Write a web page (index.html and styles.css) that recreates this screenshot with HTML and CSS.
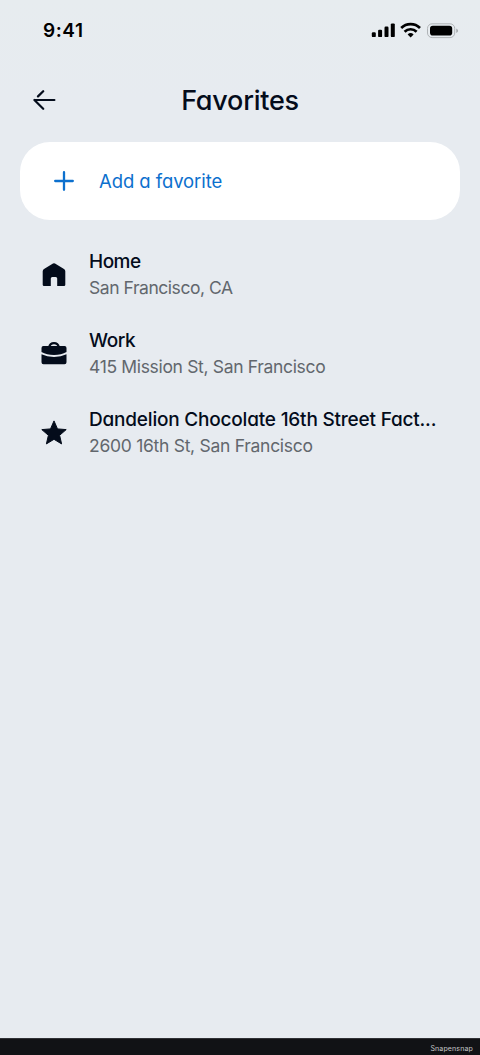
FILE: index.html
```html
<!DOCTYPE html>
<html lang="en">
<head>
<meta charset="utf-8">
<title>Favorites</title>
<link rel="stylesheet" href="styles.css">
</head>
<body>
<div class="screen">
  <div class="status">
    <span class="time">9:41</span>
    <svg class="indicators" width="88" height="18" viewBox="0 0 88 18">
      <rect x="0.8" y="10.2" width="4" height="4.9" rx="1.2"/>
      <rect x="7.1" y="7.8" width="4" height="7.3" rx="1.2"/>
      <rect x="13.5" y="4.6" width="4" height="10.5" rx="1.2"/>
      <rect x="19.8" y="1.4" width="4" height="13.7" rx="1.2"/>
      <g class="wifi">
        <path d="M30.2 6a13.4 13.4 0 0 1 18.8 0"/>
        <path d="M33.6 9.7a8.6 8.6 0 0 1 12 0"/>
      </g>
      <path d="M39.6 15.4l-3-3a4.6 4.6 0 0 1 6 0z"/>
      <rect class="shell" x="56.5" y="1.8" width="27.2" height="13.8" rx="4.6"/>
      <rect x="59" y="3.8" width="22.2" height="9.8" rx="2.8"/>
      <path class="nub" d="M85.3 6.4q1.7.9 1.7 2.3t-1.7 2.3z"/>
    </svg>
  </div>
  <header class="header">
    <svg class="back" width="24" height="22" viewBox="0 0 24 22">
      <path d="M21.4 11H1.4M10.2 2.2L5 7.4M1.4 11l8.8 8.8"/>
    </svg>
    <h1 class="title">Favorites</h1>
  </header>
  <button class="add">
    <svg class="plus" width="20" height="20" viewBox="0 0 20 20"><path d="M10 1.2v17.6M1.2 10h17.6"/></svg>
    <span class="add-label">Add a favorite</span>
  </button>
  <ul class="list">
    <li class="item">
      <svg class="icon" width="26" height="26" viewBox="0 0 26 26">
        <path d="M12 1.5q1-.6 2 0l9 5.5q1.3.9 1.3 2.3v13.4q0 1.3-1.3 1.3h-6.8v-7.5q0-1.5-1.5-1.5h-3.4q-1.5 0-1.5 1.5V24H3q-1.3 0-1.3-1.3V9.3q0-1.4 1.3-2.3z"/>
      </svg>
      <div class="text"><div class="name">Home</div><div class="place place-home">San Francisco, CA</div></div>
    </li>
    <li class="item">
      <svg class="icon" width="26" height="26" viewBox="0 0 26 26">
        <path class="handle" d="M8.2 6a4.9 4.9 0 0 1 9.6 0"/>
        <path d="M2.4 5.1h21.2q1.9 0 1.9 1.9v4.1Q20.4 14 13 14T.5 11.1V7q0-1.9 1.9-1.9z"/>
        <path d="M.5 13.3Q6 15.9 13 15.9t12.5-2.6v8q0 2-2 2h-21q-2 0-2-2z"/>
      </svg>
      <div class="text"><div class="name name-work">Work</div><div class="place">415 Mission St, San Francisco</div></div>
    </li>
    <li class="item">
      <svg class="icon" width="26" height="26" viewBox="0 0 26 26">
        <path class="star" d="M13 .9l3.5 8 8.7.7-6.6 5.7 2 8.6-7.6-4.6-7.6 4.6 2-8.6L.8 9.6l8.7-.7z"/>
      </svg>
      <div class="text"><div class="name name-long">Dandelion Chocolate 16th Street Fact...</div><div class="place place-long">2600 16th St, San Francisco</div></div>
    </li>
  </ul>
  <footer class="footer">Snapensnap</footer>
</div>
</body>
</html>
```
FILE: styles.css
```css
* { box-sizing: border-box; }
body { margin: 0; font-family: Inter, "Liberation Sans", sans-serif; background: #e7ebf0; color: #040c1b; }
.screen { width: 480px; height: 1055px; display: flex; flex-direction: column; background: linear-gradient(#e7ecef, #e7ebf0 100px); }
.status { height: 60px; padding: 0 21px 0 43px; display: flex; align-items: center; justify-content: space-between; color: #000; }
.time { font-size: 19px; font-weight: 600; letter-spacing: 0.55px; line-height: 24px; padding-top: 1px; }
.indicators { display: block; fill: #000; margin-top: 1px; }
.wifi { fill: none; stroke: #000; stroke-width: 2.7; }
.shell { fill: none; stroke: #b0b4b7; stroke-width: 1; }
.nub { fill: #a0a4a7; }
.header { height: 82px; padding: 0 33px; display: grid; grid-template-columns: 24px 1fr 24px; align-items: center; }
.back { fill: none; stroke: #040c1b; stroke-width: 2.2; stroke-linecap: round; stroke-linejoin: round; margin-top: -3px; }
.title { text-align: center; font-size: 27px; line-height: 34px; font-weight: 550; font-feature-settings: "cv11"; letter-spacing: -0.25px; margin: 0; }
.add { margin: 0 20px; height: 78px; border: 0; border-radius: 30px; background: #fff; padding: 0 34px; display: flex; align-items: center; gap: 25px; font-family: inherit; color: #0c70ce; }
.plus { fill: none; stroke: #0c70ce; stroke-width: 2.3; stroke-linecap: round; }
.add-label { font-size: 18.5px; line-height: 24px; font-weight: 400; font-feature-settings: "cv11"; letter-spacing: -0.08px; }
.list { list-style: none; margin: 0; padding: 15px 20px 0 41px; flex: 1; }
.item { height: 79px; display: flex; align-items: center; gap: 22px; }
.icon { flex: none; fill: #040c1b; }
.handle { fill: none; stroke: #040c1b; stroke-width: 2.2; }
.star { stroke: #040c1b; stroke-width: 1; stroke-linejoin: round; }
.text { white-space: nowrap; }
.name { font-size: 19px; line-height: 26px; padding-top: 1px; font-weight: 550; font-feature-settings: "cv11"; letter-spacing: -0.5px; }
.name-work { letter-spacing: -0.4px; }
.name-long { letter-spacing: -0.2px; }
.place { font-size: 17.5px; line-height: 26px; color: #62676d; letter-spacing: -0.33px; }
.place-home { letter-spacing: -0.45px; }
.place-long { letter-spacing: -0.28px; }
.footer { height: 17px; background: #111215; border-top: 1px solid #303236; color: #c5c6c8; font-size: 7px; line-height: 19px; letter-spacing: 0.15px; text-align: right; padding-right: 7px; }
```
